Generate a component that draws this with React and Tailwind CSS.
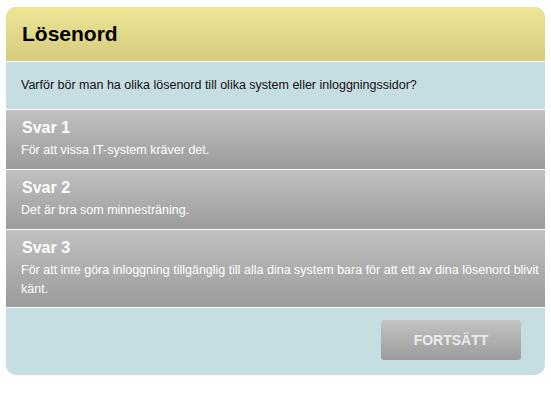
const SVAR = [
  { titel: 'Svar 1', text: 'För att vissa IT-system kräver det.', h: 'h-[60px]' },
  { titel: 'Svar 2', text: 'Det är bra som minnesträning.', h: 'h-[60px]' },
  {
    titel: 'Svar 3',
    text: 'För att inte göra inloggning tillgänglig till alla dina system bara för att ett av dina lösenord blivit känt.',
    h: 'h-[78px]',
  },
]

export default function App() {
  return (
    <div className="min-h-[400px] bg-white pt-[7px] pl-[6px] font-['Liberation_Sans',Arial,sans-serif]">
      <div className="w-[539px] rounded-[10px] overflow-hidden bg-[#c6dde2]">
        {/* Rubrik */}
        <div className="h-[55px] border-b border-white bg-gradient-to-b from-[#ece696] to-[#d6cb7d] px-4 flex items-center">
          <h1 className="text-[21px] font-bold text-black">Lösenord</h1>
        </div>

        {/* Fråga */}
        <div className="h-[48px] border-b border-white flex items-center px-[15px]">
          <p className="text-[12.5px] text-[#111]">
            Varför bör man ha olika lösenord till olika system eller inloggningssidor?
          </p>
        </div>

        {/* Svar */}
        {SVAR.map((s) => (
          <div
            key={s.titel}
            role="button"
            className={`${s.h} cursor-pointer border-b border-white bg-gradient-to-b from-[#c1c1c1] to-[#9b9b9b] pl-[15px] pr-[2px] pt-[8px]`}
          >
            <div className="text-[16px] font-bold text-white leading-[20px] pl-px">{s.titel}</div>
            <div className="text-[12.5px] text-white leading-[19px] mt-[3px]">{s.text}</div>
          </div>
        ))}

        {/* Fortsätt */}
        <div className="h-[67px] flex justify-end items-start pt-[12px] pr-[24px]">
          <button className="w-[140px] h-[40px] rounded-[3px] bg-gradient-to-b from-[#c3c3c3] to-[#9c9c9c] text-[14px] font-bold text-[#ebebeb]">
            FORTSÄTT
          </button>
        </div>
      </div>
    </div>
  )
}
